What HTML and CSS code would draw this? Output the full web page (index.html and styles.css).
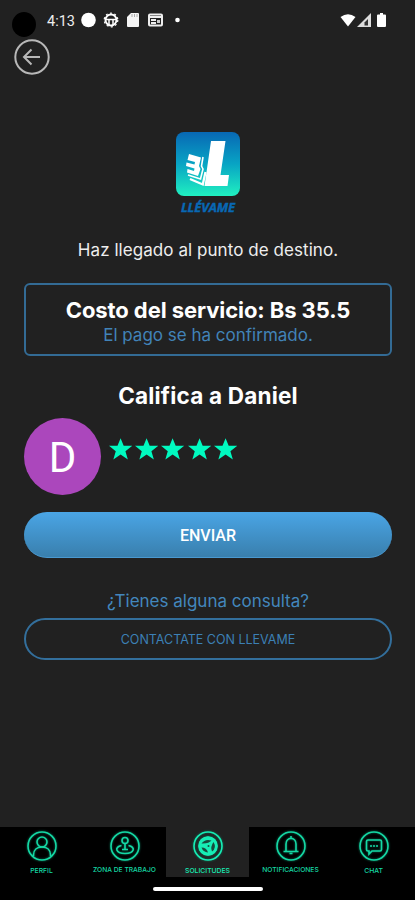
FILE: index.html
```html
<!DOCTYPE html>
<html lang="es">
<head>
<meta charset="utf-8">
<meta name="viewport" content="width=device-width, initial-scale=1">
<title>Llévame</title>
<link rel="stylesheet" href="styles.css">
</head>
<body>
<div class="screen">
  <header class="status">
    <span class="camera"></span>
    <span class="clock">4:13</span>
    <svg class="status-icons" width="104" height="18" viewBox="0 0 104 18">
      <circle cx="7.5" cy="9" r="7.3" fill="#fff"/>
      <g fill="none" stroke="#fff" stroke-width="2"><circle cx="30" cy="9" r="5.500"/><path d="M25 8.500H35M28 9v5M32 9v5" stroke-width="1.500"/><circle cx="30" cy="9" r="6.800" stroke-width="1.200" stroke-dasharray="2 2.400"/></g>
      <path d="M50 2h7a1 1 0 0 1 1 1v12a1 1 0 0 1-1 1H47a1 1 0 0 1-1-1V6z" fill="#f4f4f4"/>
      <path d="M51 3v3M53.500 3v3M56 3v3" stroke="#aaa" stroke-width="1"/>
      <rect x="68" y="3.500" width="13" height="11" rx="1" fill="none" stroke="#eee" stroke-width="2"/>
      <path d="M68 6h13M70 9h5M70 12h5" stroke="#eee" stroke-width="1.800"/><path d="M76 9h3v3h-3z" fill="#ccc"/>
      <circle cx="96.500" cy="9" r="2.300" fill="#fff"/>
    </svg>
    <svg class="signals" width="48" height="16" viewBox="0 0 48 16">
      <path d="M0.500 4Q8-1.500 15.500 4L8 13.500z" fill="#fff"/>
      <path d="M31 0v14H17z" fill="#ddd"/><path d="M28 6v6.500h-3.500V9.500z" fill="#333"/>
      <path d="M38 1.500h2V0h3v1.500h2a1 1 0 0 1 1 1V13a1 1 0 0 1-1 1h-7a1 1 0 0 1-1-1V2.500a1 1 0 0 1 1-1z" fill="#fff"/>
    </svg>
  </header>
  <button class="back" aria-label="Volver">
    <svg width="36" height="36" viewBox="0 0 36 36" fill="none" stroke="#b8b8b8" stroke-width="2"><circle cx="18" cy="18" r="16.700"/><path d="M26 18H10.500M17.500 10.500L10 18l7.500 7.500"/></svg>
  </button>
  <main class="content">
    <div class="logo">
      <svg width="64" height="64" viewBox="0 0 64 64">
        <defs><linearGradient id="brand" x1="0" y1="0" x2="0" y2="1"><stop offset="0" stop-color="#0868b4"/><stop offset=".5" stop-color="#08a4c4"/><stop offset="1" stop-color="#20f0c0"/></linearGradient></defs>
        <rect width="64" height="64" rx="8" fill="url(#brand)"/>
        <path d="M35 9H49.500L44.500 43H53L51.500 54H28.500z" fill="#fff"/>
        <path d="M13 22L25 25.500L23 34L24.500 37L22 44L11 40.500L11.500 37L18 39L18.500 36.500L10 34L10.500 30.500L18.500 32.500L19 30L11.500 28z" fill="#fff"/>
        <path d="M27 25L25.500 34L27 37L24.500 47L12 43" fill="none" stroke="#fff" stroke-width="1.600"/>
        <path d="M29.500 40L26.800 52.500L14 47" fill="none" stroke="#fff" stroke-width="2.300"/>
      </svg>
      <span class="wordmark">LLÉVAME</span>
    </div>
    <p class="arrival">Haz llegado al punto de destino.</p>
    <section class="cost">
      <h1 class="amount">Costo del servicio: Bs 35.5</h1>
      <p class="paid">El pago se ha confirmado.</p>
    </section>
    <h2 class="rate">Califica a Daniel</h2>
    <section class="driver">
      <span class="avatar">D</span>
      <div class="stars">
        <svg viewBox="0 0 24 23"><path d="M12 0l3.200 8H24l-7 5.500L19.500 22 12 17 4.500 22 7 13.500 0 8h8.800z"/></svg>
        <svg viewBox="0 0 24 23"><path d="M12 0l3.200 8H24l-7 5.500L19.500 22 12 17 4.500 22 7 13.500 0 8h8.800z"/></svg>
        <svg viewBox="0 0 24 23"><path d="M12 0l3.200 8H24l-7 5.500L19.500 22 12 17 4.500 22 7 13.500 0 8h8.800z"/></svg>
        <svg viewBox="0 0 24 23"><path d="M12 0l3.200 8H24l-7 5.500L19.500 22 12 17 4.500 22 7 13.500 0 8h8.800z"/></svg>
        <svg viewBox="0 0 24 23"><path d="M12 0l3.200 8H24l-7 5.500L19.500 22 12 17 4.500 22 7 13.500 0 8h8.800z"/></svg>
      </div>
    </section>
    <button class="send">ENVIAR</button>
    <p class="question">¿Tienes alguna consulta?</p>
    <button class="contact">CONTACTATE CON LLEVAME</button>
  </main>
  <footer class="bottom">
    <nav class="tabs">
      <a class="tab"><svg viewBox="0 0 32 32"><circle cx="16" cy="16" r="14"/><circle cx="16" cy="12" r="5"/><path d="M7.500 26v-1c0-5 3.500-8 8.500-8s8.500 3 8.500 8v1"/></svg><span>PERFIL</span></a>
      <a class="tab"><svg viewBox="0 0 32 32"><circle cx="16" cy="16" r="14"/><circle cx="16" cy="10.500" r="3"/><path d="M16 13.500v6M12.500 15.500C5 17 6.500 23.500 16 23.500S27 17 19.500 15.500M13 19.500h6"/></svg><span>ZONA DE TRABAJO</span></a>
      <a class="tab active"><svg viewBox="0 0 32 32"><circle cx="16" cy="16" r="14"/><circle cx="16" cy="16" r="9.500" fill="#17edb5" stroke="none"/><circle cx="16" cy="16" r="9"/><g fill="#174b3e" stroke="none"><path d="M9.500 13.500Q13 8.500 19.500 10.500Q16.500 14 9.500 13.500z"/><path d="M21.500 12Q25 18 20 21.500Q18 17 21.500 12z"/><path d="M9.500 17.500Q14.500 17.500 16 22.500Q11 22 9.500 17.500z"/><circle cx="16.500" cy="16" r="1"/></g></svg><span>SOLICITUDES</span></a>
      <a class="tab"><svg viewBox="0 0 32 32"><circle cx="16" cy="16" r="14"/><path d="M16 6v2M8.500 21.500h15M11 21v-7c0-7.500 10-7.500 10 0v7M14.500 23.500h3"/></svg><span>NOTIFICACIONES</span></a>
      <a class="tab"><svg viewBox="0 0 32 32"><circle cx="16" cy="16" r="14"/><path d="M10 10h12q1.500 0 1.500 1.500v8q0 1.500-1.500 1.500h-8l-3 3v-3h-1q-1.500 0-1.500-1.500v-8Q8.500 10 10 10z"/><path d="M12 16h2M15 16h2M18 16h2"/></svg><span>CHAT</span></a>
    </nav>
    <div class="home"></div>
  </footer>
</div>
</body>
</html>
```
FILE: styles.css
```css
* { box-sizing: border-box; margin: 0; }
body { background: #212121; font-family: Inter, "Open Sans", sans-serif; }
button { padding: 0; border: 0; background: none; font: inherit; }
svg { display: block; }
.screen { display: flex; flex-direction: column; height: 900px; width: 415px; overflow: hidden; background: #212121; }
.status { display: flex; align-items: center; height: 40px; padding: 0 27px 0 12px; flex: none; }
.camera { width: 24px; height: 25px; margin-top: 8px; border-radius: 50%; background: #000; }
.clock { width: 33px; margin-left: 11px; margin-top: 2px; font: 400 14.5px Roboto, sans-serif; color: #eee; white-space: nowrap; }
.status-icons { margin-left: 1px; }
.signals { margin-left: auto; margin-top: 1px; }
.back { display: block; width: 36px; height: 36px; margin: -1px 0 0 14px; flex: none; }
.content { display: flex; flex-direction: column; padding: 57px 23px 0 24px; flex: 1; text-align: center; }
.logo { display: flex; flex-direction: column; align-items: center; height: 84px; }
.wordmark { margin-top: 4px; font: italic 700 13px/15px "Open Sans", sans-serif; color: #0868b4; letter-spacing: -.1px; -webkit-text-stroke: .4px #0868b4; }
.arrival { margin-top: 23px; height: 22px; font-size: 17px; line-height: 22px; letter-spacing: .06px; color: #eee; white-space: nowrap; }
.cost { margin-top: 22px; height: 73px; padding-top: 11px; border: 2px solid #336b95; border-radius: 6px; }
.amount { font-size: 22px; line-height: 28px; font-weight: 700; letter-spacing: -.08px; color: #fff; white-space: nowrap; }
.paid { font-size: 17px; line-height: 22px; color: #4183b8; white-space: nowrap; }
.rate { margin-top: 26px; font-size: 22.5px; line-height: 28px; font-weight: 700; letter-spacing: .2px; color: #fff; }
.driver { display: flex; margin-top: 8px; height: 77px; }
.avatar { width: 77px; height: 77px; border-radius: 50%; background: #ab47bc; color: #fff; font: 400 42px/79px Roboto, sans-serif; }
.stars { display: flex; gap: 3px; margin: 20px 0 0 8px; }
.stars svg { width: 23.2px; height: 22.5px; fill: #00fac0; }
.send { height: 46px; margin-top: 17px; border-radius: 23px; background: linear-gradient(#4aa5e5, #397fad); font: 500 16px/48px Roboto, sans-serif; color: #fff; border-bottom: 1px solid #4a99d0; }
.question { margin-top: 32px; font-size: 17px; line-height: 22px; color: #4387bd; white-space: nowrap; }
.contact { height: 42px; margin-top: 6px; border: 2px solid #336f9c; border-radius: 21px; color: #3c80b5; font-size: 12.5px; }
.bottom { height: 73px; background: #000; flex: none; }
.tabs { display: grid; grid-template-columns: repeat(5, 1fr); height: 50px; }
.tab { display: flex; flex-direction: column; align-items: center; padding-top: 3px; color: #15d9a5; }
.tab.active { background: #212121; color: #17edb5; }
.tab svg { width: 32px; height: 32px; fill: none; stroke: currentColor; stroke-width: 1.6; filter: drop-shadow(0 0 1px #08765a); }
.tab span { margin-top: 4px; font-size: 6.8px; line-height: 9px; font-weight: 500; white-space: nowrap; }
.tab:nth-child(2) span, .tab:nth-child(4) span { font-size: 6.7px; }
.home { width: 110px; height: 4px; margin: 10px auto 0; border-radius: 2px; background: #fff; }
```
